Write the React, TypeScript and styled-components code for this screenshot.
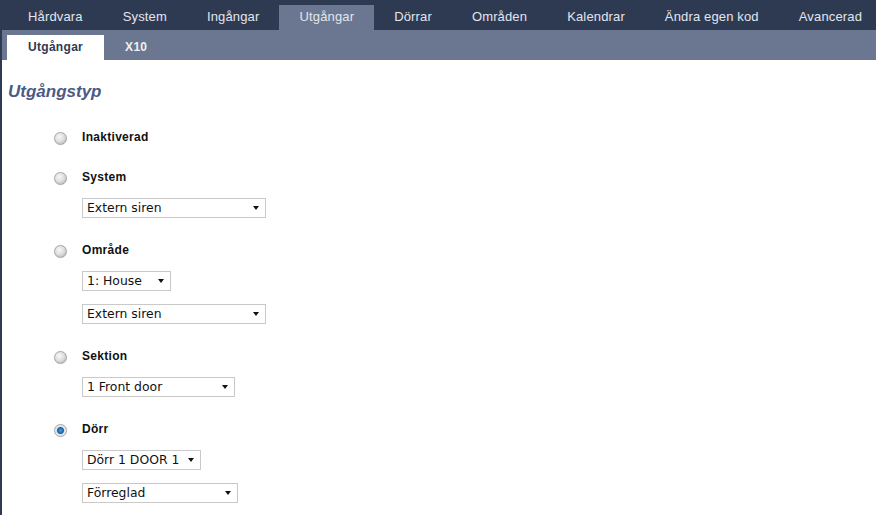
import styled, { createGlobalStyle } from "styled-components"

const GlobalStyle = createGlobalStyle`
    html, body {
        margin: 0;
        padding: 0;
        background: #ffffff;
        font-family: "Liberation Sans", Arial, sans-serif;
    }
`

const mainTabs = ["Hårdvara", "System", "Ingångar", "Utgångar", "Dörrar", "Områden", "Kalendrar", "Ändra egen kod", "Avancerad"]
const subTabs = ["Utgångar", "X10"]

type Option = {
    label: string
    checked?: boolean
    selects: { value: string; width: number }[]
}

const options: Option[] = [
    { label: "Inaktiverad", selects: [] },
    { label: "System", selects: [{ value: "Extern siren", width: 184 }] },
    { label: "Område", selects: [{ value: "1: House", width: 89 }, { value: "Extern siren", width: 184 }] },
    { label: "Sektion", selects: [{ value: "1 Front door", width: 153 }] },
    { label: "Dörr", checked: true, selects: [{ value: "Dörr 1 DOOR 1", width: 119 }, { value: "Förreglad", width: 156 }] },
]

export default function App() {
    return (
        <Page>
            <GlobalStyle />
            <TopBar>
                {mainTabs.map((tab) => (
                    <MainTab key={tab} $active={tab === "Utgångar"}>{tab}</MainTab>
                ))}
            </TopBar>
            <Body>
                <SubBar>
                    {subTabs.map((tab) => (
                        <SubTab key={tab} $active={tab === "Utgångar"}>{tab}</SubTab>
                    ))}
                </SubBar>
                <Content>
                    <Heading>Utgångstyp</Heading>
                    <OptionList>
                        {options.map((opt) => (
                            <OptionRow key={opt.label}>
                                <Radio $checked={!!opt.checked} />
                                <OptionBody>
                                    <OptionLabel>{opt.label}</OptionLabel>
                                    {opt.selects.map((s, i) => (
                                        <SelectBox key={i} style={{ width: s.width }}>
                                            <SelectText>{s.value}</SelectText>
                                            <Arrow />
                                        </SelectBox>
                                    ))}
                                </OptionBody>
                            </OptionRow>
                        ))}
                    </OptionList>
                </Content>
            </Body>
        </Page>
    )
}

const Page = styled.div`
    width: 876px;
    min-height: 515px;
    background: #ffffff;
`

const TopBar = styled.div`
    display: flex;
    align-items: flex-end;
    height: 30px;
    padding-left: 8px;
    background: #2e3a52;
`

const MainTab = styled.div<{ $active: boolean }>`
    height: 25px;
    line-height: 24px;
    padding: 0 20px;
    font-size: 13px;
    letter-spacing: 0.15px;
    color: #e2e6ee;
    white-space: nowrap;
    background: ${(p) => (p.$active ? "#6b7790" : "transparent")};
`

const Body = styled.div`
    border-left: 2px solid #2e3a52;
    min-height: 485px;
`

const SubBar = styled.div`
    display: flex;
    align-items: flex-end;
    height: 30px;
    padding-left: 5px;
    background: #6b7790;
`

const SubTab = styled.div<{ $active: boolean }>`
    height: 25px;
    line-height: 24px;
    padding: 0 21px;
    font-size: 12px;
    font-weight: bold;
    letter-spacing: 0.3px;
    color: ${(p) => (p.$active ? "#2e3a52" : "#eef0f4")};
    background: ${(p) => (p.$active ? "#ffffff" : "transparent")};
`

const Content = styled.div`
    padding: 22px 0 0 6px;
`

const Heading = styled.h2`
    margin: 0;
    font-size: 17px;
    font-style: italic;
    font-weight: bold;
    color: #4b5a84;
    line-height: 20px;
`

const OptionList = styled.div`
    display: flex;
    flex-direction: column;
    gap: 24px;
    padding: 27px 0 0 46px;
`

const OptionRow = styled.div`
    display: flex;
    gap: 15px;
`

const Radio = styled.span<{ $checked: boolean }>`
    flex: none;
    width: 11px;
    height: 11px;
    margin-top: 3px;
    border-radius: 50%;
    border: 1px solid #a4a7ab;
    box-shadow: 0 0 1px rgba(0, 0, 0, 0.15);
    background: ${(p) =>
        p.$checked
            ? "radial-gradient(circle, #48a0e0 0, #1f5f9e 3px, #d6e2ec 4px, #f2f4f6 6px)"
            : "radial-gradient(circle at 40% 35%, #f8f8f8 0, #dcdcdc 5px, #c4c4c4 7px)"};
`

const OptionBody = styled.div`
    display: flex;
    flex-direction: column;
    align-items: flex-start;
    gap: 13px;
`

const OptionLabel = styled.div`
    font-size: 12px;
    font-weight: bold;
    line-height: 16px;
    letter-spacing: 0.3px;
    color: #111111;
`

const SelectBox = styled.div`
    position: relative;
    box-sizing: border-box;
    height: 20px;
    border: 1px solid #c9c9c9;
    background: #ffffff;
`

const SelectText = styled.span`
    display: block;
    padding-left: 4px;
    font-family: "DejaVu Sans", Verdana, sans-serif;
    font-size: 12.4px;
    line-height: 18px;
    color: #111111;
    white-space: nowrap;
`

const Arrow = styled.span`
    position: absolute;
    right: 6px;
    top: 7px;
    width: 0;
    height: 0;
    border-left: 3.5px solid transparent;
    border-right: 3.5px solid transparent;
    border-top: 4px solid #111111;
`
